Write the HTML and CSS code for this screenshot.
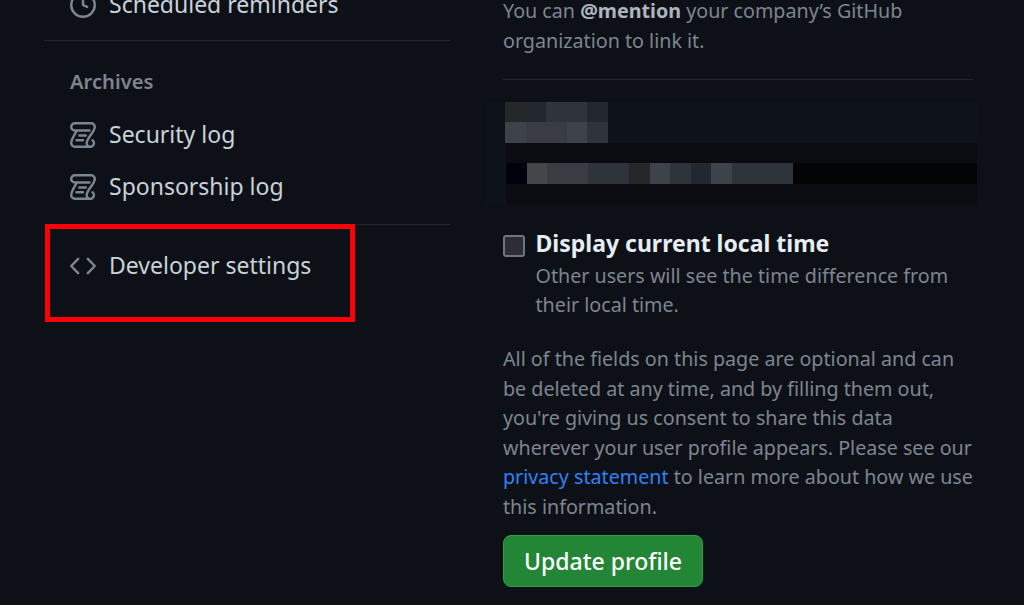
FILE: index.html
```html
<!DOCTYPE html>
<html lang="en">
<head>
    <meta charset="UTF-8">
    <meta name="viewport" content="width=device-width, initial-scale=1.0">
    <title>Profile settings</title>
    <link rel="stylesheet" href="styles.css">
</head>
<body>
    <div class="page">
        <nav class="sidebar">
            <div class="nav-group reminders">
                <a class="nav-item">
                    <svg class="nav-icon" viewBox="0 0 16 16"><circle cx="8" cy="8" r="7.25" class="line"/><path d="M8 4.5V8l2.5 1.2" class="line"/></svg>
                    <span>Scheduled reminders</span>
                </a>
            </div>
            <div class="nav-group archives">
                <h3 class="nav-heading">Archives</h3>
                <a class="nav-item">
                    <svg class="nav-icon" viewBox="0 0 16 16"><path d="M3 .75h10A2.25 2.25 0 0 1 15.25 3c0 3-5 7-5 10a2.25 2.25 0 1 0 3.6-1.8M3 .75A2.25 2.25 0 0 0 .75 3c0 1.3 1 2.25 2.25 2.25h9M4.2 5.25C3 7.500.75 10.500.75 13A2.25 2.25 0 0 0 3 15.250h10M5.750 8.250h4M4 11.250h4" class="line"/></svg>
                    <span>Security log</span>
                </a>
                <a class="nav-item">
                    <svg class="nav-icon" viewBox="0 0 16 16"><path d="M3 .75h10A2.25 2.25 0 0 1 15.25 3c0 3-5 7-5 10a2.25 2.25 0 1 0 3.6-1.8M3 .75A2.25 2.25 0 0 0 .75 3c0 1.3 1 2.25 2.25 2.25h9M4.2 5.25C3 7.500.75 10.500.75 13A2.25 2.25 0 0 0 3 15.250h10M5.750 8.250h4M4 11.250h4" class="line"/></svg>
                    <span>Sponsorship log</span>
                </a>
            </div>
            <div class="nav-group developer">
                <a class="nav-item">
                    <svg class="nav-icon" viewBox="0 0 16 16"><path d="M5 3.600.75 8 5 12.400M11 3.600l4.250 4.400-4.250 4.400" class="line"/></svg>
                    <span>Developer settings</span>
                </a>
                <div class="highlight"></div>
            </div>
        </nav>

        <main class="content">
            <p class="note">You can <strong>@mention</strong> your company’s GitHub organization to link it.</p>
            <hr class="rule">

            <div class="blurred">
                <div class="blur-row short">
                    <i class="c1"></i><i class="c2"></i><i class="c3"></i><i class="c3"></i><i class="c2"></i>
                </div>
                <div class="blur-row short">
                    <i class="c5"></i><i class="c4"></i><i class="c4"></i><i class="c5"></i><i class="c3"></i>
                </div>
                <div class="blur-row long dark"></div>
                <div class="blur-row long black">
                    <i class="c0"></i>
                    <i class="c6"></i><i class="c4"></i><i class="c4"></i><i class="c3"></i><i class="c3"></i><i class="c1"></i>
                    <i class="c5"></i><i class="c3"></i><i class="c2"></i><i class="c5"></i><i class="c3"></i><i class="c3"></i><i class="c3"></i>
                </div>
                <div class="blur-row long dark"></div>
            </div>

            <div class="check-row">
                <span class="checkbox"></span>
                <div>
                    <div class="check-label">Display current local time</div>
                    <p class="check-note">Other users will see the time difference from their local time.</p>
                </div>
            </div>

            <p class="consent">All of the fields on this page are optional and can be deleted at any time, and by filling them out, you're giving us consent to share this data wherever your user profile appears. Please see our <a class="link">privacy statement</a> to learn more about how we use this information.</p>

            <button class="btn-update" type="button">Update profile</button>
        </main>
    </div>
</body>
</html>
```

FILE: styles.css
```css
html, body {
    height: 100%;
}
body {
    margin: 0;
    background-color: #0d1117;
    color: #c9d1d9;
    font-family: "Noto Sans", sans-serif;
    font-size: 19.7px;
    line-height: 29.5px;
    overflow: hidden;
}
.page {
    display: flex;
    margin-top: -4px;
    padding-left: 44px;
}

/* sidebar */
.sidebar {
    width: 406px;
    flex-shrink: 0;
}
.nav-group {
    border-bottom: 1px solid #21262d;
}
.nav-group:last-child {
    border-bottom: none;
}
.nav-item {
    display: flex;
    align-items: center;
    gap: 13px;
    height: 52px;
    padding-left: 26px;
    font-size: 23px;
}
.reminders {
    margin-top: -17px;
    height: 61px;
}
.nav-icon {
    width: 26px;
    height: 26px;
    flex-shrink: 0;
}
.line {
    fill: none;
    stroke: #7d8590;
    stroke-width: 1.5;
    stroke-linecap: round;
    stroke-linejoin: round;
}
.nav-heading {
    margin: 0;
    padding: 26px 0 0 26px;
    height: 42px;
    font-size: 20.2px;
    line-height: 29.5px;
    font-weight: 600;
    color: #7d8590;
}
.archives {
    height: 183px;
}
.developer {
    position: relative;
    padding-top: 15px;
}
.highlight {
    position: absolute;
    left: 1px;
    top: -1px;
    width: 300px;
    height: 88px;
    border: 5px solid #fb0007;
}

/* main column */
.content {
    width: 470px;
    margin-left: 53px;
}
.note {
    margin: 0;
}
.note strong {
    font-weight: 700;
    color: #adb5bd;
}
.note, .consent, .check-note {
    color: #7d8590;
}
.rule {
    margin: 24px 0 0;
    border: none;
    border-top: 1px solid #21262d;
}
.blurred {
    margin: 22px 0 26px -18px;
    padding-left: 18px;
    width: 474px;
    background-color: #0e1219;
}
.blur-row {
    display: flex;
    height: 20.4px;
}
.blur-row i {
    display: block;
    width: 20.5px;
    flex-shrink: 0;
}
.short {
    width: 103px;
    margin-left: 2px;
}
.long {
    width: 471px;
    margin-left: 3px;
}
.dark {
    background-color: #0a0c11;
}
.black {
    background-color: #030406;
}
.c0 { background-color: #00030c; }
.c1 { background-color: #24282b; }
.c2 { background-color: #23272f; }
.c3 { background-color: #2f333a; }
.c4 { background-color: #393d43; }
.c5 { background-color: #3e4249; }
.c6 { background-color: #44474a; }
.check-row {
    display: flex;
    gap: 10.5px;
}
.checkbox {
    width: 18px;
    height: 18px;
    margin-top: 5px;
    flex-shrink: 0;
    background-color: #2d2d35;
    border: 2px solid #6e7681;
    border-radius: 3px;
}
.check-label {
    margin-top: -1px;
    font-weight: 700;
    font-size: 23px;
    color: #e6edf3;
}
.check-note {
    margin: 2.500px 0 0;
}
.consent {
    margin: 24.500px 0 0;
}
.link {
    color: #2f81f7;
}
.btn-update {
    display: block;
    margin-top: 14px;
    height: 52px;
    padding: 0 20px;
    background-color: #238636;
    border: 1px solid #2ea043;
    border-radius: 8px;
    color: #fff;
    font-family: "Noto Sans", sans-serif;
    font-size: 23px;
    font-weight: 500;
}
```
